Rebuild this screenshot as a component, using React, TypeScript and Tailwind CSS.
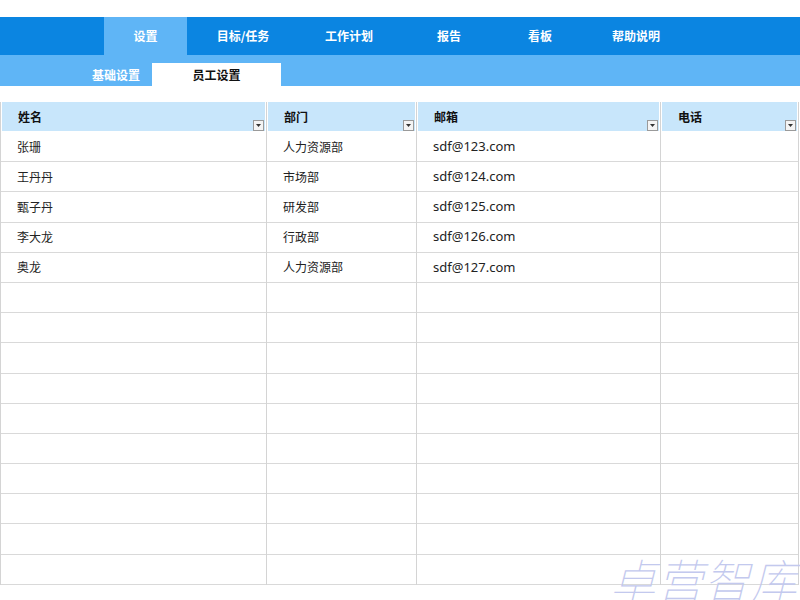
import React from "react";

const navItems = [
  { label: "设置", w: "w-[83px]", active: true },
  { label: "目标/任务", w: "w-[112px]" },
  { label: "工作计划", w: "w-[100px]" },
  { label: "报告", w: "w-[100px]" },
  { label: "看板", w: "w-[82px]" },
  { label: "帮助说明", w: "w-[110px]" },
];

const cols = [
  { title: "姓名", w: "w-[267px] border-l border-l-[#d4d4d4]" },
  { title: "部门", w: "w-[150px]" },
  { title: "邮箱", w: "w-[244px]" },
  { title: "电话", w: "w-[138px]" },
];

const data = [
  ["张珊", "人力资源部", "sdf@123.com", ""],
  ["王丹丹", "市场部", "sdf@124.com", ""],
  ["甄子丹", "研发部", "sdf@125.com", ""],
  ["李大龙", "行政部", "sdf@126.com", ""],
  ["奥龙", "人力资源部", "sdf@127.com", ""],
];

const rows: string[][] = [];
for (let i = 0; i < 15; i++) rows.push(data[i] ?? ["", "", "", ""]);

function FilterBtn() {
  return (
    <div className="absolute right-[1px] bottom-0 w-[11px] h-[11px] border border-[#9a9a9a] bg-[#f4f4f4] flex items-center justify-center">
      <svg width="5" height="3" viewBox="0 0 5 3">
        <path d="M0 0 L5 0 L2.5 3 Z" fill="#333" />
      </svg>
    </div>
  );
}

export default function App() {
  const font = { fontFamily: '"Noto Sans CJK SC", "Noto Sans", sans-serif' };
  return (
    <div className="relative w-[800px] h-[600px] bg-white overflow-hidden" style={font}>
      <div className="h-[17px]" />
      <div className="h-[38px] bg-[#0b85e1] flex pl-[104px]">
        {navItems.map((n) => (
          <div
            key={n.label}
            className={`${n.w} flex items-center justify-center text-[12px] font-bold text-white ${n.active ? "bg-[#5fb5f6]" : ""}`}
          >
            {n.label}
          </div>
        ))}
      </div>
      <div className="h-[31px] bg-[#5fb5f6] flex items-end pl-[80px]">
        <div className="w-[72px] h-[23px] flex items-center justify-center text-[12px] font-bold text-white">
          基础设置
        </div>
        <div className="w-[129px] h-[23px] bg-white flex items-center justify-center text-[12px] font-bold text-[#111]">
          员工设置
        </div>
      </div>
      <div className="h-[16px]" />
      <div className="flex">
        {cols.map((c, ci) => (
          <div key={c.title} className={`${c.w} border-r border-r-[#d4d4d4] flex flex-col`}>
            <div className="relative h-[29px] mb-[1px] bg-[#c8e6fb] mx-[1px] flex items-center pl-[16px] text-[12px] font-bold text-[#111]">
              {c.title}
              <FilterBtn />
            </div>
            {rows.map((r, ri) => (
              <div
                key={ri}
                className={`h-[30.2px] border-b border-b-[#d9d9d9] flex items-center pl-[16px] text-[#222] ${ci === 2 ? "text-[13px]" : "text-[12px]"}`}
                style={ci === 2 ? { fontFamily: '"Noto Sans", "Open Sans", sans-serif' } : undefined}
              >
                {r[ci]}
              </div>
            ))}
          </div>
        ))}
      </div>
      <div
        className="absolute left-[610px] top-[555px] text-[46px] italic font-thin text-[#c3c9ee] tracking-[1px] leading-none whitespace-nowrap"
        style={font}
      >
        卓营智库
      </div>
    </div>
  );
}
